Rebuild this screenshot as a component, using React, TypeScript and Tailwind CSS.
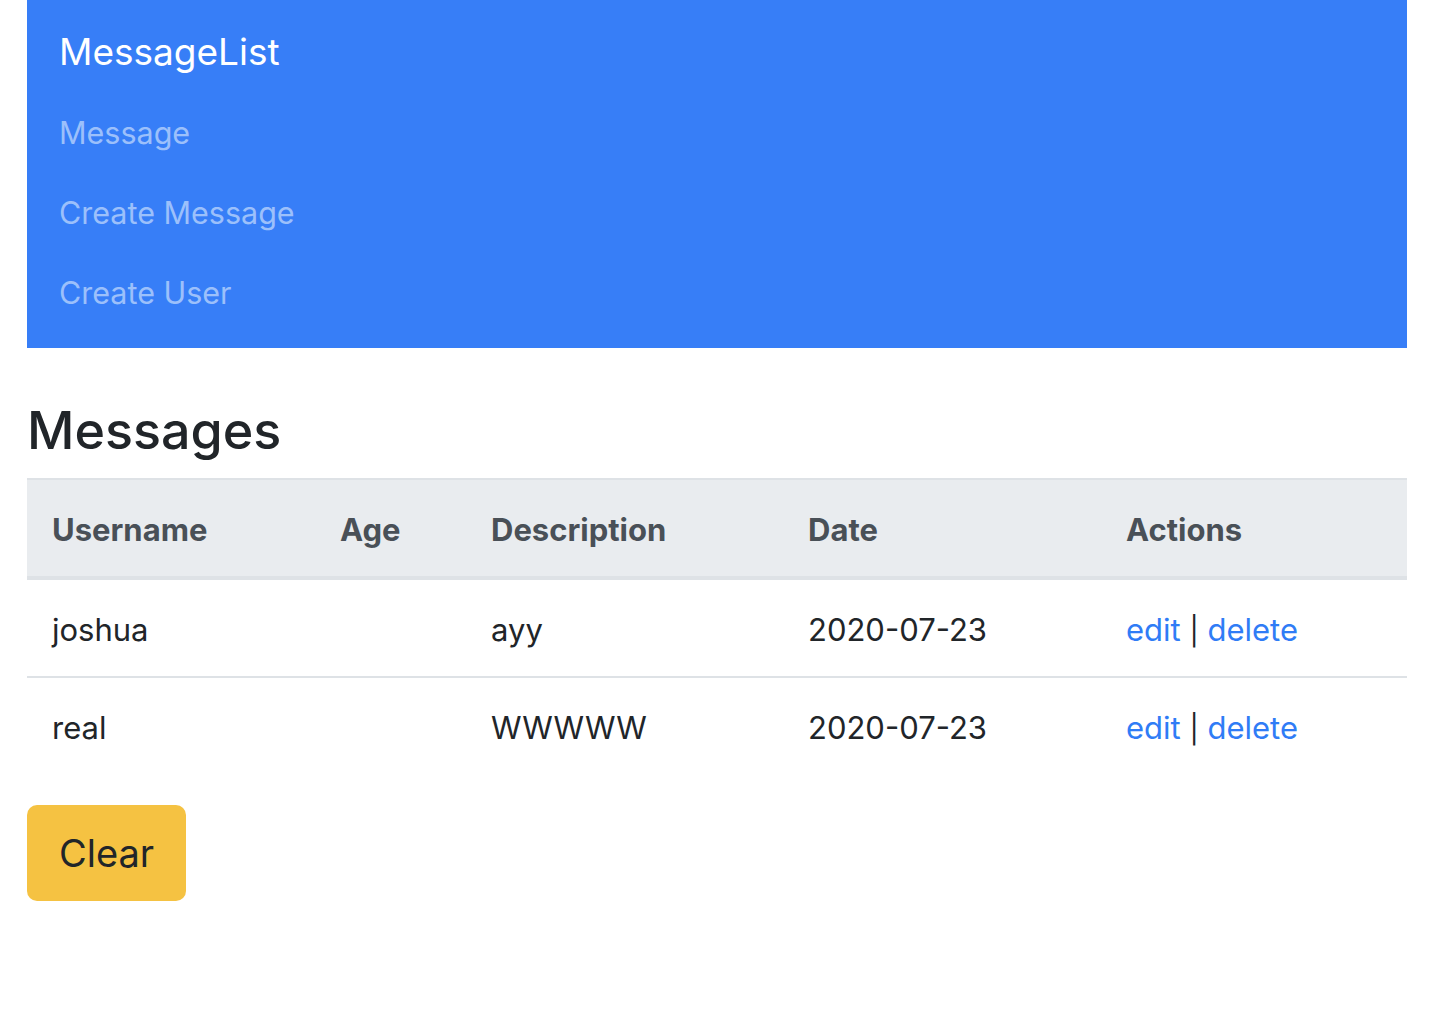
import React from "react";

const rows = [
  { username: "joshua", age: "", description: "ayy", date: "2020-07-23" },
  { username: "real", age: "", description: "WWWWW", date: "2020-07-23" },
];

const cols = ["w-[288px]", "w-[151px]", "w-[317px]", "w-[318px]", ""];

export default function App() {
  return (
    <div
      className="min-h-[1026px] bg-white pl-[27px] pr-[33px] text-[#212529]"
      style={{ fontFamily: "Inter, 'Noto Sans', sans-serif" }}
    >
      <nav className="h-[348px] bg-[#377ef7] px-[32px] pt-[14px]">
        <div className="py-[10px] text-[37px] leading-[56px] text-white">MessageList</div>
        <ul className="mt-[3px]">
          {["Message", "Create Message", "Create User"].map((l) => (
            <li key={l} className="py-[16px] text-[30.5px] leading-[48px] text-[#9cc0fb]">
              {l}
            </li>
          ))}
        </ul>
      </nav>

      <h2 className="mt-[52px] mb-[16px] text-[52px] font-medium leading-[62px]">Messages</h2>

      <table className="w-full border-collapse text-[31px]">
        <thead>
          <tr className="border-t-2 border-b-4 border-[#dee2e6] bg-[#e9ecef] text-left text-[#495057]">
            {["Username", "Age", "Description", "Date", "Actions"].map((h, i) => (
              <th key={h} className={`${cols[i]} px-[25px] pt-[26px] pb-[22px] font-bold leading-[48px]`}>
                {h}
              </th>
            ))}
          </tr>
        </thead>
        <tbody>
          {rows.map((r, i) => (
            <tr key={i} className={i === 0 ? "border-b-2 border-[#dee2e6]" : ""}>
              <td className="h-[97px] px-[25px] pt-[26px] pb-[22px] leading-[48px]">{r.username}</td>
              <td className="h-[97px] px-[25px] pt-[26px] pb-[22px] leading-[48px]">{r.age}</td>
              <td className="h-[97px] px-[25px] pt-[26px] pb-[22px] leading-[48px]">{r.description}</td>
              <td className="h-[97px] px-[25px] pt-[26px] pb-[22px] leading-[48px]">{r.date}</td>
              <td className="h-[97px] px-[25px] pt-[26px] pb-[22px] leading-[48px]">
                <a className="text-[#2f7cf6]" href="#">edit</a>{" "}
                <span className="text-[28px] leading-none">|</span>{" "}
                <a className="text-[#2f7cf6]" href="#">delete</a>
              </td>
            </tr>
          ))}
        </tbody>
      </table>

      <button className="mt-[31px] h-[96px] rounded-[10px] bg-[#f5c242] px-[32px] text-[38px] leading-[60px] text-[#212529]">
        Clear
      </button>
    </div>
  );
}
